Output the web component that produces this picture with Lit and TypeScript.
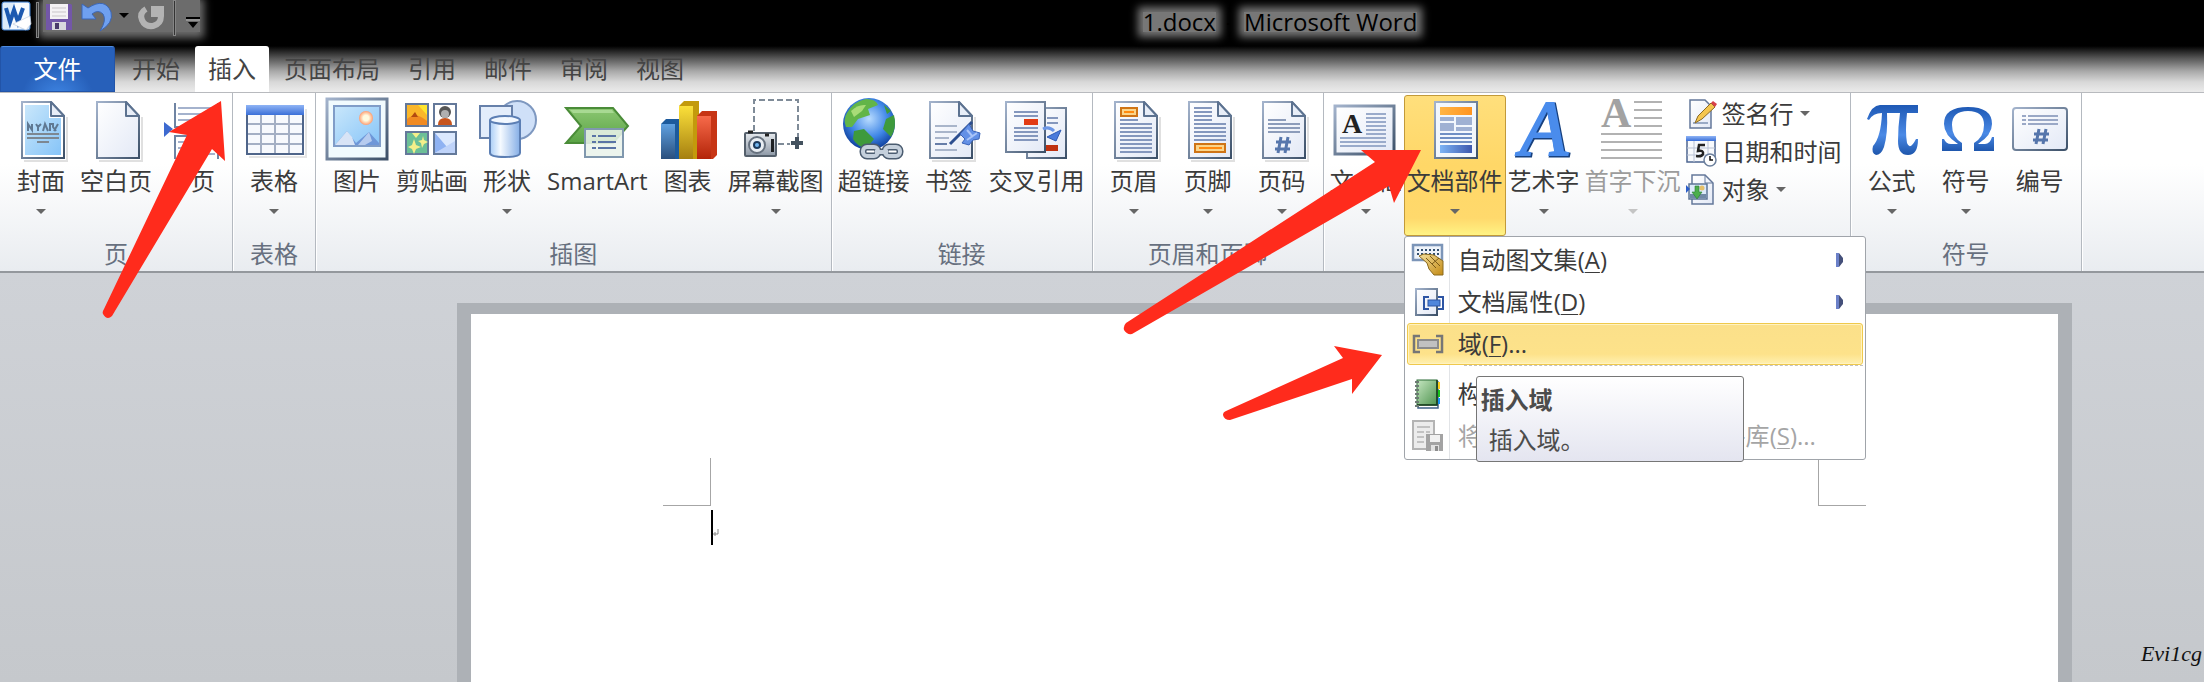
import { LitElement, html, svg, css, nothing } from "lit";
import { customElement } from "lit/decorators.js";
import { classMap } from "lit/directives/class-map.js";

/* ---------- shared drawing parts ---------- */

const defs = html`<svg class="defs" width="0" height="0" aria-hidden="true">
  <defs>
    <linearGradient id="edge" x1="0" y1="0" x2="1" y2="1"><stop offset="0" stop-color="#a3b3cc" /><stop offset="1" stop-color="#3c5068" /></linearGradient>
    <linearGradient id="paper" x1="0" y1="0" x2="1" y2="1"><stop offset="0" stop-color="#fff" /><stop offset="1" stop-color="#e3e9f6" /></linearGradient>
    <linearGradient id="sky" x1="0" y1="0" x2="1" y2="1"><stop offset="0" stop-color="#c9e7fb" /><stop offset="1" stop-color="#86c4f8" /></linearGradient>
    <linearGradient id="head" x1="0" y1="0" x2="0" y2="1"><stop offset="0" stop-color="#8fb4f5" /><stop offset="1" stop-color="#3a6fd8" /></linearGradient>
    <linearGradient id="foot" x1="0" y1="0" x2="1" y2="0"><stop offset="0" stop-color="#7db4f5" /><stop offset="1" stop-color="#3d58ae" /></linearGradient>
    <linearGradient id="cyl" x1="0" y1="0" x2="1" y2="0"><stop offset="0" stop-color="#a9cdf6" /><stop offset="0.35" stop-color="#f5faff" /><stop offset="1" stop-color="#85aee6" /></linearGradient>
    <linearGradient id="green" x1="0" y1="0" x2="0" y2="1"><stop offset="0" stop-color="#8cc772" /><stop offset="1" stop-color="#5aa345" /></linearGradient>
    <linearGradient id="barBlue" x1="0" y1="0" x2="0" y2="1"><stop offset="0" stop-color="#5fa0e0" /><stop offset="1" stop-color="#2a4f7d" /></linearGradient>
    <linearGradient id="barYellow" x1="0" y1="0" x2="0" y2="1"><stop offset="0" stop-color="#fbe03a" /><stop offset="1" stop-color="#a57f10" /></linearGradient>
    <linearGradient id="barRed" x1="0" y1="0" x2="0" y2="1"><stop offset="0" stop-color="#f76a4a" /><stop offset="1" stop-color="#b32408" /></linearGradient>
    <linearGradient id="orange" x1="0" y1="0" x2="1" y2="0"><stop offset="0" stop-color="#ffb545" /><stop offset="1" stop-color="#ff9420" /></linearGradient>
    <linearGradient id="ink" x1="0" y1="0" x2="0" y2="1"><stop offset="0" stop-color="#1e59b5" /><stop offset="0.6" stop-color="#4b8ae6" /><stop offset="1" stop-color="#1e56ac" /></linearGradient>
    <linearGradient id="metal" x1="0" y1="0" x2="0" y2="1"><stop offset="0" stop-color="#e6eaee" /><stop offset="1" stop-color="#8d98a6" /></linearGradient>
    <linearGradient id="gold" x1="0" y1="0" x2="1" y2="1"><stop offset="0" stop-color="#f5e2a0" /><stop offset="1" stop-color="#c38a14" /></linearGradient>
    <linearGradient id="book" x1="0" y1="0" x2="1" y2="1"><stop offset="0" stop-color="#c5e6c0" /><stop offset="1" stop-color="#4f9450" /></linearGradient>
    <radialGradient id="globe" cx="0.5" cy="0.4" r="0.6"><stop offset="0" stop-color="#b9dcff" /><stop offset="0.6" stop-color="#3f86e6" /><stop offset="1" stop-color="#0e3f9c" /></radialGradient>
    <radialGradient id="sun"><stop offset="0.4" stop-color="#fffbe0" /><stop offset="1" stop-color="#ff9d70" /></radialGradient>
  </defs>
</svg>`;

const line = (x1: number, x2: number, y: number, c = "#8497bd") =>
  svg`<path d="M${x1} ${y}H${x2}" stroke=${c} stroke-width="2"/>`;
const lines = (x1: number, x2: number, ys: number[], c?: string) => ys.map((y) => line(x1, x2, y, c));

const sheet = (fill = "url(#paper)") => svg`
  <path d="M15 64H58V20" fill="none" stroke="#000" stroke-opacity=".12" stroke-width="2"/>
  <path d="M13 5H42L55 19V61H13Z" fill=${fill} stroke="url(#edge)" stroke-width="2"/>
  <path d="M42 5V19H55Z" fill="#e8eef8" stroke="#5c7290" stroke-width="2" stroke-linejoin="round"/>`;

const art: Record<string, unknown> = {
  cover: svg`${sheet("#fff")}<path d="M16 8H40V21H52V58H16Z" fill="url(#sky)"/>
    <path d="M19 34V27L23 33V27M27 27L29 30V34M32 27L29 30M34 34L36 27L39 34M41 34V27H44V30L47 34M45 34L49 27" fill="none" stroke="#5f7892" stroke-width="2"/>
    ${lines(18, 50, [37, 41], "#7d8791")}${line(28, 40, 45, "#7d8791")}`,
  blank: sheet(),
  break: svg`<path d="M16 6V30H59V6" fill="#fff" stroke="#6f84a3" stroke-width="2"/>
    ${lines(19, 56, [11, 17, 23], "#a4b2cd")}
    <path d="M16 62V39H59V62" fill="#fff" stroke="#6f84a3" stroke-width="2"/>
    ${lines(19, 56, [45, 51, 57], "#a4b2cd")}
    <path d="M5 25L14 32L5 40Z" fill="#3d6ad0"/>`,
  table: svg`<path d="M7 60H64V12" fill="none" stroke="#000" stroke-opacity=".1" stroke-width="2"/>
    <rect x="5" y="9" width="56" height="48" fill="#f7f9fd" stroke="#4f658a" stroke-width="2"/>
    <rect x="4" y="8" width="58" height="10" fill="url(#head)"/>
    <path d="M19 18V56M33 18V56M47 18V56M6 27H60M6 37H60M6 47H60" stroke="#a4afc4" stroke-width="2"/>`,
  picture: svg`<rect x="2" y="2" width="60" height="60" fill="#f1fbfe" stroke="url(#edge)" stroke-width="3"/>
    <rect x="9" y="9" width="46" height="40" fill="url(#sky)" stroke="#809dc8" stroke-width="2"/>
    <circle cx="41" cy="21" r="7" fill="url(#sun)"/>
    <path d="M10 48L22 34L31 46L44 35L54 46V48Z" fill="#6e97d8"/>
    <path d="M10 48L22 34L27 40L30 48Z" fill="#d8e4f6"/><path d="M33 48L44 35L47 44L40 48Z" fill="#b5cbef"/>`,
  clipart: svg`<rect x="6" y="7" width="22" height="22" fill="#fbb72a" stroke="#64799a" stroke-width="2"/>
    <path d="M7 22Q16 14 27 24V28H7Z" fill="#f08a22"/><path d="M18 8H27V18Z" fill="#ffe52e"/><path d="M11 20L15 15L18 20Z" fill="#b34a10"/>
    <rect x="34" y="7" width="22" height="22" fill="#fff" stroke="#64799a" stroke-width="2"/>
    <circle cx="45" cy="15" r="6" fill="#555"/><ellipse cx="45" cy="17" rx="4" ry="4" fill="#b0b0b0"/><path d="M38 28Q38 21 45 21T52 28Z" fill="#c7541c"/>
    <rect x="6" y="35" width="22" height="22" fill="#6cbf97" stroke="#64799a" stroke-width="2"/>
    <path d="M14 42L16 48L21 50L16 52L14 57L12 52L8 50L12 48ZM23 39L24 43L28 45L24 47L22 51L21 46L18 44L22 43ZM12 36H20L16 41Z" fill="#f5ef8a"/>
    <rect x="34" y="35" width="22" height="22" fill="#dbe8fd" stroke="#64799a" stroke-width="2"/>
    <path d="M35 36L47 50L35 56Z" fill="#8fb2f2"/><path d="M35 56L55 44V56Z" fill="#bfd3f9"/>`,
  shapes: svg`<circle cx="42" cy="23" r="19" fill="#cfe0f8" stroke="#7e98c0" stroke-width="2"/>
    <rect x="5" y="9" width="32" height="32" fill="#e3edfb" stroke="#6680aa" stroke-width="2"/>
    <path d="M15 23V56Q15 60 30 60T45 56V23" fill="url(#cyl)" stroke="#5c7fb4" stroke-width="2"/>
    <ellipse cx="30" cy="23" rx="15" ry="4" fill="#f2f8ff" stroke="#5c7fb4" stroke-width="2"/>`,
  smartart: svg`<path d="M1 11H48L63 29L48 46H1L16 29Z" fill="url(#green)" stroke="#4a8c38" stroke-width="2"/>
    <path d="M5 13H47L49 16H8Z" fill="#b6e2a2" opacity=".7"/>
    <rect x="20" y="32" width="38" height="28" fill="#e9f3ea" fill-opacity=".88" stroke="#8098ae" stroke-width="2"/>
    ${[39, 45, 51].map((y) => svg`<path d="M27 ${y}H31M33 ${y}H51" stroke="#5a74a6" stroke-width="2"/>`)}`,
  chart: svg`<path d="M5 27L10 22H23V62H5Z" fill="#1c5a9c"/><rect x="5" y="27" width="14" height="35" fill="url(#barBlue)"/>
    <path d="M23 9L28 4H43V62H23Z" fill="#c39a0c"/><rect x="23" y="9" width="14" height="53" fill="url(#barYellow)"/>
    <path d="M41 19L46 14H61V58L57 62H41Z" fill="#c73515"/><rect x="41" y="19" width="14" height="43" fill="url(#barRed)"/>`,
  capture: svg`<path d="M10 34V3H54V40M34 47H46" fill="none" stroke="#7f8b98" stroke-width="2" stroke-dasharray="6 3"/>
    <path d="M47 46H59M53 40V52" stroke="#44525f" stroke-width="4"/>
    <rect x="1" y="36" width="31" height="23" rx="1" fill="url(#metal)" stroke="#55606c" stroke-width="2"/>
    <path d="M4 35H9M21 38H25" stroke="#222" stroke-width="3"/><rect x="27" y="42" width="3" height="13" fill="#1d2023"/>
    <circle cx="13" cy="48" r="8" fill="#e9eef3" stroke="#66717e" stroke-width="2"/><circle cx="13" cy="48" r="4" fill="#1c3a5c"/><circle cx="13" cy="48" r="2" fill="#74b6ee"/>`,
  globe: svg`<circle cx="27" cy="27" r="26" fill="url(#globe)"/>
    <path d="M5 16Q12 4 24 2Q34 2 36 8L26 12L28 18L16 22L10 30L4 30Q1 22 5 16Z" fill="#62b548"/>
    <path d="M9 14Q16 7 24 8L20 14L12 20Z" fill="#a8dc78"/>
    <path d="M12 34L22 32L32 42L24 52Q14 48 11 42ZM44 22L52 18Q55 30 49 40L41 32ZM42 8L49 14L45 17Z" fill="#3e9a3c"/>
    <g fill="none" stroke="#4b5c70" stroke-width="7"><rect x="21" y="50" width="15" height="9" rx="4"/><rect x="43" y="50" width="15" height="9" rx="4"/><path d="M33 55H46"/></g>
    <g fill="none" stroke="#c5d0dc" stroke-width="4"><rect x="21" y="50" width="15" height="9" rx="4"/><rect x="43" y="50" width="15" height="9" rx="4"/><path d="M33 55H46"/></g>`,
  bookmark: svg`${sheet()}${line(18, 40, 29, "#a9b5ca")}${line(18, 40, 35, "#a9b5ca")}${line(18, 32, 41, "#a9b5ca")}${line(18, 30, 47, "#667da8")}${line(18, 40, 53, "#a9b5ca")}
    <path d="M33 47L55 25" stroke="#2d4f8f" stroke-width="3"/>
    <path d="M43 37L52 27L56 34L63 36L62 42L56 43L52 48L45 46L48 42Z" fill="#6390e6" stroke="#3a63b8" stroke-width="1"/>
    <path d="M50 43L60 36M50 33L56 40" stroke="#a9c4f8" stroke-width="2"/>`,
  crossref: svg`<rect x="22" y="11" width="39" height="50" fill="url(#paper)" stroke="url(#edge)" stroke-width="2"/>
    ${lines(42, 53, [21, 26])}<rect x="40" y="48" width="13" height="6" fill="#bf3210"/>
    <rect x="1" y="5" width="39" height="50" fill="url(#paper)" stroke="url(#edge)" stroke-width="2"/>
    ${lines(9, 33, [15, 19, 31, 35, 39, 43])}<rect x="19" y="22" width="14" height="6" fill="#e23b14"/>
    <path d="M38 32Q44 29 49 34" fill="none" stroke="#6d97e6" stroke-width="3"/><path d="M42 40L56 33L51 44Z" fill="#4a7bdc" stroke="#2f5bb4"/>`,
  header: svg`${sheet()}<rect x="19" y="11" width="16" height="8" fill="#fbd58a" stroke="#cf7415" stroke-width="2"/>${line(22, 32, 15, "#ff8a10")}
    ${line(18, 36, 23)}${lines(18, 50, [27, 31, 35, 39, 43, 47, 51, 55])}`,
  footer: svg`${sheet()}${lines(18, 36, [11, 15, 19, 23])}${lines(18, 50, [27, 31, 35, 39, 43])}
    <rect x="19" y="47" width="30" height="8" fill="#fbd58a" stroke="#cf7415" stroke-width="2"/>${line(23, 46, 51, "#ff8a10")}`,
  number: svg`${sheet()}${line(18, 36, 23, "#8c9cba")}${lines(18, 50, [27, 31, 35], "#8c9cba")}
    <path d="M31 40L28 56M38 40L35 56M26 45H41M25 52H40" stroke="#5676ac" stroke-width="3"/>`,
  textbox: svg`<rect x="1" y="9" width="59" height="48" fill="url(#paper)" stroke="url(#edge)" stroke-width="3"/>
    <text x="8" y="36" font-family="Liberation Serif" font-weight="700" font-size="28" fill="#222">A</text>
    ${lines(32, 52, [17, 21, 25, 29, 33, 37], "#9aabcb")}${lines(6, 52, [41, 45, 49], "#9aabcb")}`,
  parts: svg`<rect x="12" y="5" width="42" height="56" fill="#f2f7fd" stroke="url(#edge)" stroke-width="2"/>
    <rect x="17" y="10" width="32" height="8" fill="url(#orange)"/>
    <path d="M17 20H31V24H17ZM33 20H49V28H33ZM17 26H31V34H17ZM33 30H49V34H33Z" fill="#9fb1d3"/>
    ${lines(17, 49, [37, 41, 45], "#6f8fc4")}<rect x="17" y="48" width="32" height="8" fill="url(#foot)"/>`,
  wordart: svg`<text x="9" y="58" font-family="Liberation Serif" font-style="italic" font-size="78" fill="#17407e" stroke="#17407e" stroke-width="3">A</text>
    <text x="8" y="57" font-family="Liberation Serif" font-style="italic" font-size="78" fill="#4a8cec" stroke="#4a8cec" stroke-width="2">A</text>`,
  dropcap: svg`<text x="0" y="30" font-family="Liberation Serif" font-weight="700" font-size="42" fill="#a2a2a2">A</text>
    ${lines(33, 61, [5, 13, 21, 29], "#b2b2b2")}${lines(0, 61, [37, 45, 53, 61], "#b2b2b2")}`,
  pi: svg`<path d="M7 22Q12 8 20 8H58V16H47Q45 34 47 46Q50 54 56 42H58Q58 58 48 58Q38 58 38 44Q38 30 40 16H27Q28 36 24 50Q21 58 16 58Q11 56 13 49Q21 40 22 16Q13 16 9 23Z" fill="url(#ink)"/>`,
  omega: svg`<path d="M8 42H10Q12 47 17 47H24Q10 38 10 27Q10 10 34 10Q58 10 58 27Q58 38 44 47H51Q56 47 58 40H60V54H40V46Q50 40 50 28Q50 14 34 14Q18 14 18 28Q18 40 28 46V54H8Z" fill="url(#ink)"/>`,
  numbering: svg`<rect x="5" y="11" width="54" height="42" rx="3" fill="url(#paper)" stroke="url(#edge)" stroke-width="2"/>
    ${[19, 23, 27].map((y) => svg`<path d="M14 ${y}H18M20 ${y}H50" stroke="#9aa8c6" stroke-width="2"/>`)}
    <path d="M31 32L28 47M38 32L35 47M26 37H41M25 43H40" stroke="#5676ac" stroke-width="3"/>`,

  /* 32px drawings */
  sign: svg`<path d="M4 2H19L25 8V30H4Z" fill="url(#paper)" stroke="#64789a" stroke-width="1.5"/>
    <path d="M7 25H22" stroke="#7f93b5" stroke-width="1.5"/><path d="M9 25L12 18L25 5L29 9L16 21Z" fill="#f5c64f" stroke="#8b6a24"/><path d="M25 5L27 3L31 6L29 9Z" fill="#d8414a"/>`,
  date: svg`<rect x="1" y="1" width="28" height="25" fill="#f8fafd" stroke="#4e6690" stroke-width="1.5"/><rect x="0" y="0" width="30" height="5" fill="url(#head)"/>
    <path d="M8 5V26M22 5V26M1 12H29M1 19H29" stroke="#b9c2d4"/>
    <path d="M19 9H13L12 15Q18 14 17 18Q16 21 10 20" fill="none" stroke="#222" stroke-width="2.5"/>
    <circle cx="24" cy="24" r="6" fill="#fff" stroke="#6b7f9c" stroke-width="1.5"/><path d="M24 20V24H27" fill="none" stroke="#111" stroke-width="1.5"/>`,
  object: svg`<path d="M6 1H19L27 9V30H6Z" fill="url(#paper)" stroke="#64789a" stroke-width="1.5"/><path d="M19 1V9H27" fill="none" stroke="#64789a"/>
    <rect x="3" y="10" width="18" height="15" fill="#dceafa" stroke="#5d7596" stroke-width="1.5"/><rect x="4" y="20" width="16" height="4" fill="#7189a6"/>
    <circle cx="16" cy="14" r="2.5" fill="#e5c069"/><path d="M9 12H13V18H16L11 25L6 18H9Z" fill="#4cae4c" stroke="#2a7d32" stroke-width=".6"/><path d="M0 11L4 15L0 19Z" fill="#2c5ec8"/>`,
  autotext: svg`<rect x="1" y="1" width="29" height="15" fill="#eef3fa" stroke="#7c95b8" stroke-width="2.5"/><path d="M5 6H27M5 10H27" stroke="#33506f" stroke-width="2" stroke-dasharray="2 2"/>
    <path d="M7 12L12 10L22 11L31 17V31H22L17 25L15 19Z" fill="url(#gold)" stroke="#8b6a1e"/><path d="M14 14L24 24M18 12L28 22M20 20L27 14" stroke="#7a5a18" stroke-width="1"/>`,
  property: svg`<rect x="4" y="3" width="21" height="26" fill="url(#paper)" stroke="url(#edge)" stroke-width="2"/>
    <path d="M17 11H12V23H17M26 11H31V23H26" fill="none" stroke="#2d55a4" stroke-width="2"/><rect x="16" y="14" width="12" height="6" fill="#4f86dc" stroke="#2d55a4"/>`,
  field: svg`<path d="M8 8H2V24H8M24 8H30V24H24" fill="none" stroke="#767676" stroke-width="2.5"/><rect x="6" y="12" width="20" height="8" fill="#c1c1c1" stroke="#8b8b8b" stroke-width="2"/>`,
  blocks: svg`<path d="M6 4H26V30H6Z" fill="#fff" stroke="#3f5f86" stroke-width="1.5"/><rect x="5" y="2" width="20" height="25" fill="url(#book)" stroke="#2a6a34" stroke-width="1"/>
    <path d="M25 2V27H5" fill="none" stroke="#173a1c" stroke-width="1.5"/>
    <path d="M26 4H28V11H26Z" fill="#ffcf1e"/><path d="M26 12H28V19H26Z" fill="#16c21a"/><path d="M26 20H28V26H26Z" fill="#1793f5"/>
    <path d="M3 4H7M3 8H7M3 12H7M3 16H7M3 20H7M3 24H7M3 28H7" stroke="#6d7b74" stroke-width="2"/>`,
  save2: svg`<rect x="1" y="1" width="21" height="28" fill="#ececec" stroke="#b4b4b4" stroke-width="2"/><path d="M5 7H18M5 12H12M14 12H18M5 17H12M5 22H12" stroke="#c2c2c2" stroke-width="2"/>
    <rect x="14" y="14" width="17" height="17" fill="#a3a3a3"/><rect x="18" y="15" width="10" height="7" fill="#f1f1f1"/><rect x="19" y="25" width="8" height="6" fill="#e2e2e2"/><rect x="23" y="26" width="3" height="5" fill="#8d8d8d"/>`,

  /* quick access drawings */
  word: svg`<rect x="2" y="2" width="28" height="28" rx="2" fill="#dcebfa" stroke="#3e7fcf" stroke-width="1"/><path d="M15 3H29V20L20 29H10Z" fill="#f7fbff"/>
    <path d="M6 8L10 22L14 10L18 22L23 8" fill="none" stroke="#1c59b0" stroke-width="4"/><path d="M13 24L30 16L31 24L26 30Z" fill="#fff" stroke="#c3cfdf" stroke-width=".7"/>`,
  save: svg`<path d="M3 4H28L29 5V30H3Z" fill="#7357a8"/><rect x="7" y="4" width="18" height="15" fill="#f4f2f4"/><path d="M9 8H23M9 12H23M9 16H23" stroke="#c9c5c9"/><rect x="9" y="22" width="14" height="8" fill="#d9d8dd"/><rect x="12" y="23" width="4" height="6" fill="#4a3a6a"/>`,
  undo: svg`<path d="M1 4V19H15L11 14Q17 9 22 14Q26 20 19 31Q33 23 30 12Q24 -3 7 8Z" fill="#6fa0f0" stroke="#3c66b4" stroke-width="1"/>`,
  redo: svg`<path d="M11 9Q4 13 7 20Q10 27 18 26Q26 24 26 16V10" fill="none" stroke="#b3b3b3" stroke-width="6"/><path d="M16 6H29V11L24 17H16Z" fill="#b3b3b3"/>`,
};

const icon = (name: string, size: 32 | 64 = 64) =>
  html`<svg class="icon" width=${size} height=${size} viewBox="0 0 ${size} ${size}" aria-hidden="true">${art[name]}</svg>`;

const caret = html`<svg class="caret" width="10" height="6" viewBox="0 0 10 6" aria-hidden="true"><path d="M0 0H10L5 5Z" /></svg>`;

/* ---------- data ---------- */

type Cmd = { label: string; icon: string; drop?: boolean; disabled?: boolean; open?: boolean };
type Group = { label: string; cmds: Cmd[]; rows?: Cmd[] };

const TABS = ["开始", "插入", "页面布局", "引用", "邮件", "审阅", "视图"];

const GROUPS: Group[] = [
  { label: "页", cmds: [{ label: "封面", icon: "cover", drop: true }, { label: "空白页", icon: "blank" }, { label: "分页", icon: "break" }] },
  { label: "表格", cmds: [{ label: "表格", icon: "table", drop: true }] },
  {
    label: "插图",
    cmds: [
      { label: "图片", icon: "picture" },
      { label: "剪贴画", icon: "clipart" },
      { label: "形状", icon: "shapes", drop: true },
      { label: "SmartArt", icon: "smartart" },
      { label: "图表", icon: "chart" },
      { label: "屏幕截图", icon: "capture", drop: true },
    ],
  },
  { label: "链接", cmds: [{ label: "超链接", icon: "globe" }, { label: "书签", icon: "bookmark" }, { label: "交叉引用", icon: "crossref" }] },
  {
    label: "页眉和页脚",
    cmds: [{ label: "页眉", icon: "header", drop: true }, { label: "页脚", icon: "footer", drop: true }, { label: "页码", icon: "number", drop: true }],
  },
  {
    label: "文本",
    cmds: [
      { label: "文本框", icon: "textbox", drop: true },
      { label: "文档部件", icon: "parts", drop: true, open: true },
      { label: "艺术字", icon: "wordart", drop: true },
      { label: "首字下沉", icon: "dropcap", drop: true, disabled: true },
    ],
    rows: [{ label: "签名行", icon: "sign", drop: true }, { label: "日期和时间", icon: "date" }, { label: "对象", icon: "object", drop: true }],
  },
  { label: "符号", cmds: [{ label: "公式", icon: "pi", drop: true }, { label: "符号", icon: "omega", drop: true }, { label: "编号", icon: "numbering" }] },
];

type Item = { icon: string; text: string; key: string; tail: string; sub?: boolean; hot?: boolean; disabled?: boolean };
const MENU: (Item | null)[] = [
  { icon: "autotext", text: "自动图文集", key: "A", tail: ")", sub: true },
  { icon: "property", text: "文档属性", key: "D", tail: ")", sub: true },
  { icon: "field", text: "域", key: "F", tail: ")...", hot: true },
  null,
  { icon: "blocks", text: "构建基块管理器", key: "B", tail: ")..." },
  { icon: "save2", text: "将所选内容保存到文档部件库", key: "S", tail: ")...", disabled: true },
];

@customElement("app-root")
export class AppRoot extends LitElement {
  static styles = css`
    :host {
      display: flex;
      flex-direction: column;
      position: relative;
      min-height: 100vh;
      box-sizing: border-box;
      overflow: hidden;
      font: 24px/32px "Open Sans", "Noto Sans CJK SC", sans-serif;
      color: #3b3b3b;
      background: linear-gradient(#cfd2d7 272px, #c5c8cc);
    }
    * { box-sizing: border-box; }
    button {
      font: inherit;
      color: inherit;
      background: none;
      border: 0;
      margin: 0;
      padding: 0;
      white-space: nowrap;
    }
    .defs { position: absolute; }
    .icon { display: block; flex: none; overflow: visible; }
    .caret { display: block; flex: none; fill: #666; }

    .top { background: linear-gradient(#000 46px, #555 58px, #a8a8a8 71px, #d8d8d8 82px, #ebebeb); }
    .bar { display: flex; height: 46px; }
    .quick { display: flex; width: 356px; align-items: flex-start; }
    .tools {
      display: flex;
      align-items: center;
      height: 32px;
      margin-left: 4px;
      gap: 6px;
      background: #6c6c6c;
      box-shadow: 0 2px 8px 4px #6c6c6c;
    }
    .rule { width: 3px; height: 36px; margin: 2px 0 0 4px; border: 1px solid #858585; background: #333; position: relative; }
    .rule.in { margin: 4px 0 0; }
    .tools .caret { fill: #000; }
    .more { padding: 8px 0 0 4px; }
    .title { flex: 1; margin: 0; font: inherit; color: #000; text-align: center; }
    .glow { background: #777; box-shadow: 0 0 8px 5px #777; line-height: 20px; display: inline-block; margin: 12px 4px 0; }

    .tabs { display: flex; height: 46px; gap: 2px; }
    .tab { padding: 0 13px; color: #444; border-radius: 3px 3px 0 0; }
    .tab.on { background: #fff; }
    .file {
      width: 115px;
      margin-right: 2px;
      color: #fff;
      border: 1px solid #2254a8;
      border-top-color: #4d8be0;
      border-radius: 3px 3px 0 0;
      background: radial-gradient(ellipse at 50% 115%, #3f86e4, #2760ba 45%);
    }

    .ribbon {
      display: flex;
      position: relative;
      z-index: 1;
      border-top: 1px solid #b8babe;
      border-bottom: 2px solid #94989d;
      background: linear-gradient(#fff 40%, #e9ecf0);
    }
    .group { display: flex; flex-direction: column; padding: 2px 4px 0; border-right: 1px solid #b4b9c0; box-shadow: 1px 0 #fff; }
    .cmds { display: flex; height: 141px; }
    .name { height: 35px; padding-top: 2px; text-align: center; color: #67707f; }
    .slot { position: relative; }
    .cmd {
      display: flex;
      flex-direction: column;
      align-items: center;
      min-width: 74px;
      height: 141px;
      padding: 1px 1px 0;
      border: 1px solid transparent;
      border-radius: 3px;
    }
    .cmd.wide { padding: 1px 2px 0; }
    .cmd .label { margin: 4px 0 12px; }
    .cmd.off { color: #9c9c9c; }
    .cmd.off .caret { fill: #c4c4c4; }
    .cmd.open {
      border-color: #c29a3a;
      background: linear-gradient(#ffdf7c, #ffd767 50%, #ffd96c 88%, #fff384);
    }
    .rows { display: flex; flex-direction: column; width: 162px; }
    .row { display: flex; align-items: center; gap: 4px; height: 38px; padding-left: 2px; }
    .row .caret { margin-left: 2px; }

    .menu {
      position: absolute;
      top: 100%;
      left: 0;
      width: 462px;
      padding: 2px;
      border: 1px solid #a0a4aa;
      border-radius: 3px;
      background: linear-gradient(90deg, #fff 45px, #e2e4e7 45px, #e2e4e7 46px, #fff 46px);
      background-origin: border-box;
    }
    .item {
      display: flex;
      align-items: center;
      width: 100%;
      height: 42px;
      padding: 0 18px 0 4px;
      gap: 14px;
      border: 1px solid transparent;
      border-radius: 3px;
    }
    .item .label { flex: 1; text-align: left; }
    .item u { text-decoration-thickness: 1px; text-underline-offset: 3px; }
    .item.hot { border-color: #efc94c; background: linear-gradient(#fbe08a, #fde28a 75%, #fff0b0); box-shadow: inset 0 0 0 1px #fff2c0; }
    .item.off { color: #a5a5a5; }
    .split { height: 8px; margin: 0 0 0 57px; border: 0; border-top: 1px dashed #c2c2c2; }
    .tip {
      position: absolute;
      left: 71px;
      top: 139px;
      width: 268px;
      padding: 7px 4px 5px;
      border: 1px solid #767676;
      border-radius: 3px;
      background: linear-gradient(#fff, #e4e5f0);
      color: #4c4c4c;
    }
    .tip p { margin: 0; }
    .tip .head { font-weight: 700; margin-bottom: 8px; }
    .tip .body { padding-left: 8px; }

    .desk { flex: 1; display: flex; padding: 30px 132px 0 457px; }
    .page {
      flex: 1;
      background: #fff;
      border: solid #adb1b6;
      border-width: 11px 14px 0;
      padding: 144px 192px 0;
    }
    .marks { display: flex; justify-content: space-between; }
    .mark { width: 48px; height: 48px; border: solid #a6a6a6; border-width: 0 1px 1px 0; }
    .mark.right { border-width: 0 0 1px 1px; }
    .text { display: flex; align-items: flex-end; margin: 4px 0 0 48px; height: 35px; border-left: 2px solid #000; }
    .pilcrow { display: block; margin-bottom: 8px; }
    .sign {
      position: absolute;
      right: 2px;
      bottom: 15px;
      color: #111;
      font: italic 22px/26px "Liberation Serif", serif;
    }
    .arrows { position: absolute; left: 0; top: 0; z-index: 2; pointer-events: none; fill: #ff2b1c; }
  `;

  private cmd(c: Cmd) {
    const cls = classMap({ cmd: true, wide: c.label.length > 3, off: !!c.disabled, open: !!c.open });
    return html`<div class="slot">
      <button class=${cls} ?disabled=${c.disabled}>
        ${icon(c.icon)}<span class="label">${c.label}</span>${c.drop ? caret : nothing}
      </button>
      ${c.open ? this.menu() : nothing}
    </div>`;
  }

  private menu() {
    return html`<div class="menu">
      ${MENU.map((m) =>
        m
          ? html`<button class=${classMap({ item: true, hot: !!m.hot, off: !!m.disabled })} ?disabled=${m.disabled}>
              ${icon(m.icon, 32)}<span class="label">${m.text}(<u>${m.key}</u>${m.tail}</span>
              ${m.sub
                ? html`<svg width="8" height="14" viewBox="0 0 8 14" aria-hidden="true"><path d="M0 0H3L7 5V9L3 14H0Z" fill="#44507a" /><path d="M0 0H3V14H0Z" fill="#6b80c8" /></svg>`
                : nothing}
            </button>`
          : html`<hr class="split" />`
      )}
      <div class="tip" role="tooltip">
        <p class="head">插入域</p>
        <p class="body">插入域。</p>
      </div>
    </div>`;
  }

  render() {
    return html`
      ${defs}
      <header class="top">
        <div class="bar">
          <div class="quick">
            ${icon("word", 32)}
            <span class="rule"></span>
            <div class="tools">
              <button aria-label="保存">${icon("save", 32)}</button>
              <button aria-label="撤消">${icon("undo", 32)}</button>
              ${caret}
              <button aria-label="重复">${icon("redo", 32)}</button>
              <span class="rule in"></span>
              <button class="more" aria-label="自定义快速访问工具栏">
                <svg width="14" height="12" viewBox="0 0 14 12" aria-hidden="true"><path d="M0 1H14" stroke="#000" stroke-width="2" /><path d="M0 3H14" stroke="#bbb" /><path d="M2 5H12L7 11Z" /></svg>
              </button>
            </div>
          </div>
          <h1 class="title"><span class="glow">1.docx</span> - <span class="glow">Microsoft Word</span></h1>
        </div>
        <nav class="tabs">
          <button class="file">文件</button>
          ${TABS.map((t) => html`<button class=${classMap({ tab: true, on: t === "插入" })}>${t}</button>`)}
        </nav>
      </header>
      <section class="ribbon">
        ${GROUPS.map(
          (g) => html`<div class="group">
            <div class="cmds">
              ${g.cmds.map((c) => this.cmd(c))}
              ${g.rows
                ? html`<div class="rows">
                    ${g.rows.map((r) => html`<button class="row">${icon(r.icon, 32)}<span>${r.label}</span>${r.drop ? caret : nothing}</button>`)}
                  </div>`
                : nothing}
            </div>
            <div class="name">${g.label}</div>
          </div>`
        )}
      </section>
      <main class="desk">
        <div class="page">
          <div class="marks"><span class="mark"></span><span class="mark right"></span></div>
          <div class="text">
            <svg class="pilcrow" width="6" height="8" viewBox="0 0 6 8" aria-hidden="true"><path d="M5 0V5H0M2 3V7" fill="none" stroke="#888" /></svg>
          </div>
        </div>
      </main>
      <span class="sign">Evi1cg</span>
      <svg class="arrows" width="1430" height="430" viewBox="0 0 1430 430" aria-hidden="true">
        <path d="M221 101L225 161L212 149L112 316Q107 321 103 314Q102 312 104 309L187 135L169 132Z" />
        <path d="M1421 150L1394 203L1389 186L1132 334Q1127 335 1124 330Q1123 326 1126 323L1375 162L1361 150Z" />
        <path d="M1382 355L1352 394L1352 379L1230 420Q1224 420 1223 415Q1223 412 1226 411L1343 358L1334 346Z" />
      </svg>
    `;
  }
}
